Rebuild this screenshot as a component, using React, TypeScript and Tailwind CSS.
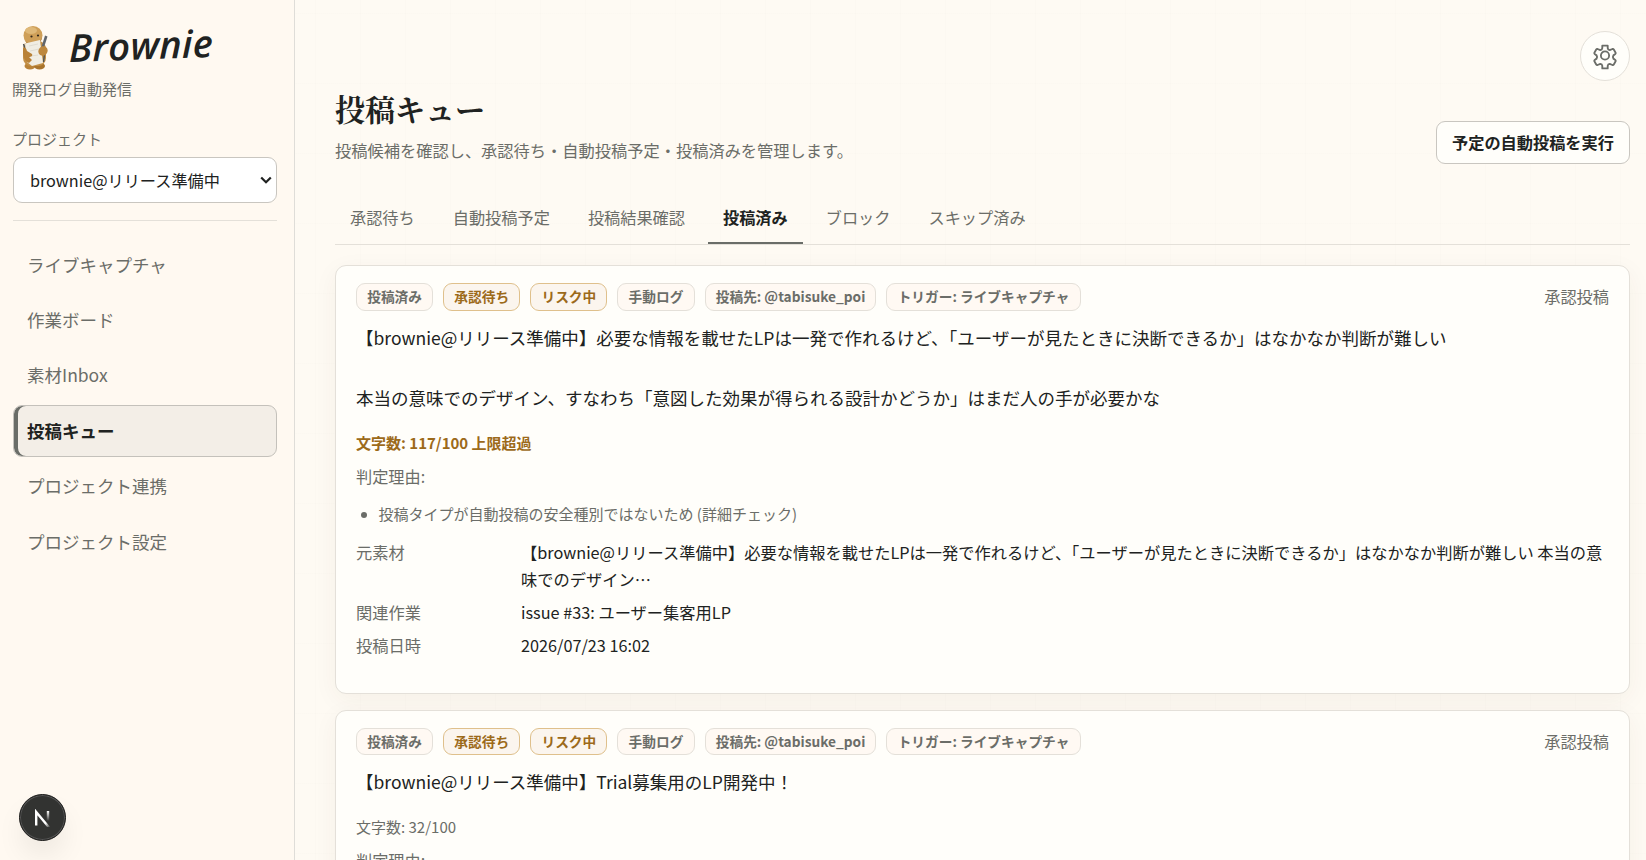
import { FC, ReactNode } from "react";

interface IPost {
  id: number;
  text: string;
  count: number;
  reasons: string[];
  source?: string;
  issue?: string;
  date?: string;
}

const navItems = [
  "ライブキャプチャ",
  "作業ボード",
  "素材Inbox",
  "投稿キュー",
  "プロジェクト連携",
  "プロジェクト設定",
];

const tabs = ["承認待ち", "自動投稿予定", "投稿結果確認", "投稿済み", "ブロック", "スキップ済み"];

const posts: IPost[] = [
  {
    id: 1,
    text: "【brownie@リリース準備中】必要な情報を載せたLPは一発で作れるけど、「ユーザーが見たときに決断できるか」はなかなか判断が難しい\n\n本当の意味でのデザイン、すなわち「意図した効果が得られる設計かどうか」はまだ人の手が必要かな",
    count: 117,
    reasons: ["投稿タイプが自動投稿の安全種別ではないため (詳細チェック)"],
    source:
      "【brownie@リリース準備中】必要な情報を載せたLPは一発で作れるけど、「ユーザーが見たときに決断できるか」はなかなか判断が難しい 本当の意味でのデザイン…",
    issue: "issue #33: ユーザー集客用LP",
    date: "2026/07/23 16:02",
  },
  {
    id: 2,
    text: "【brownie@リリース準備中】Trial募集用のLP開発中！",
    count: 32,
    reasons: [],
  },
];

const Mascot: FC = () => (
  <svg width="28" height="44" viewBox="0 0 28 44">
    <ellipse cx="9" cy="40" rx="5.500" ry="3.500" fill="#b98237" />
    <ellipse cx="18.500" cy="40" rx="5.500" ry="3.500" fill="#a9742c" />
    <rect x="2" y="15" width="23" height="25" rx="8" fill="#c38f45" />
    <path d="M2.500 18l3 9M23.500 28l-1 8" stroke="#4d5257" strokeWidth="1.400" />
    <circle cx="12" cy="9.500" r="9.500" fill="#cf9f58" />
    <path d="M3 12c2 8 16 8 18-1 0 9-16 11-18 1z" fill="#b07a33" />
    <ellipse cx="10" cy="4.500" rx="6" ry="3.500" fill="#dfb878" />
    <circle cx="10.500" cy="10.500" r="1.100" fill="#33271b" />
    <circle cx="17" cy="9.500" r="1.100" fill="#33271b" />
    <path d="M4 17.500l15-3.500 3 23-11 3-5-4z" fill="#f0ede3" />
    <path d="M8 20l9-2M9 25l9-2M10 30l7-1" stroke="#dcd8cd" strokeWidth=".8" />
    <path d="M24 9.500l2.500 1-4.500 14-2.500 2 .5-4z" fill="#60656c" />
    <path d="M2 25c0-5 3-4 4 0l5 3c1 2-1 3-3 3l3 3-3 3c-4-2-6-6-6-12z" fill="#b98136" />
    <ellipse cx="22" cy="25" rx="4.500" ry="5" transform="rotate(35 22 25)" fill="#be883e" />
  </svg>
);

const Sidebar: FC = () => (
  <aside className="w-[295px] h-full shrink-0 border-r border-[#dfddd8] bg-[#fff9f1] pl-[13px] pr-[17px] pt-[25px] text-[#6b6d68]">
    <div className="flex h-[45px] items-center">
      <div className="ml-2 w-[28px]">
        <Mascot />
      </div>
      <span className="mb-[2px] ml-[20px] origin-left -rotate-2 -skew-x-2 font-['Open_Sans'] text-[38px] leading-none font-semibold italic tracking-[0.3px] text-[#202221]">
        Brownie
      </span>
    </div>
    <p className="-ml-px mt-1.5 text-[15px] leading-[25px]">開発ログ自動発信</p>
    <p className="-ml-px mt-[25px] text-[15px] leading-[25px]">プロジェクト</p>
    <div className="relative mt-[6px]">
      <select className="block h-[46px] w-full appearance-none rounded-[9px] border border-[#c9c6c0] bg-white px-4 text-[16.200px] text-[#202221]">
        <option>brownie@リリース準備中</option>
      </select>
      <svg
        className="pointer-events-none absolute top-[19px] right-[5px]"
        width="12"
        height="9"
        viewBox="0 0 12 9"
        fill="none"
        stroke="#202221"
        strokeWidth="2.200"
      >
        <path d="M1.200 1.500L6 6.300l4.800-4.800" />
      </svg>
    </div>
    <nav className="mt-[17px] flex flex-col gap-1 border-t border-[#e4e0d9] pt-[18px]">
      {navItems.map((item) => (
        <a
          key={item}
          className={
            item === "投稿キュー"
              ? "flex h-[51.400px] items-center rounded-[9px] border border-[#c4c1bb] bg-[#f3eee7] pl-[13px] text-[17.500px] font-bold text-[#202221] shadow-[inset_4px_0_0_#6a6d68]"
              : "flex h-[51.400px] items-center pl-[14px] text-[17.500px]"
          }
        >
          {item}
        </a>
      ))}
    </nav>
  </aside>
);

const Pill: FC<{ children: ReactNode; warn?: boolean }> = ({ children, warn }) => (
  <span
    className={
      warn
        ? "rounded-[9px] border border-[#dfc08c] bg-[#fbf5ee] px-[10.200px] text-[13.700px] leading-[25.500px] font-bold text-[#9c6a1a]"
        : "rounded-[9px] border border-[#e4e0d9] bg-[#fff9f3] px-[10.200px] text-[13.700px] leading-[25.500px] font-bold text-[#6b6d68]"
    }
  >
    {children}
  </span>
);

const PostCard: FC<{ post: IPost }> = ({ post }) => (
  <article className="min-h-[428.500px] shrink-0 rounded-[11px] border border-[#e4e0d9] bg-[#fffefa] px-5 pt-[17px] shadow-[0_6px_24px_rgba(80,50,20,0.05)]">
    <div className="flex items-center gap-[10px]">
      <Pill>投稿済み</Pill>
      <Pill warn>承認待ち</Pill>
      <Pill warn>リスク中</Pill>
      <Pill>手動ログ</Pill>
      <Pill>投稿先: @tabisuke_poi</Pill>
      <Pill>トリガー: ライブキャプチャ</Pill>
      <span className="-mt-px ml-auto text-[16.200px] text-[#6b6d68]">承認投稿</span>
    </div>
    <p className="mt-[12px] text-[17.500px] leading-[30px] whitespace-pre-wrap">{post.text}</p>
    <p
      className={
        post.count > 100
          ? "mt-[17px] text-[15px] leading-[26px] font-bold text-[#9c6a1a]"
          : "mt-[17px] text-[15px] leading-[26px] text-[#6b6d68]"
      }
    >
      文字数: {post.count}/100{post.count > 100 && " 上限超過"}
    </p>
    <p className="mt-[7px] text-[16.200px] leading-[27px] text-[#6b6d68]">判定理由:</p>
    {post.reasons.length > 0 && (
      <ul className="mt-[11px] list-disc pl-[22.500px] text-[15px] leading-[26px] text-[#6b6d68]">
        {post.reasons.map((reason) => (
          <li key={reason}>{reason}</li>
        ))}
      </ul>
    )}
    {post.source && (
      <dl className="mt-[12px] grid grid-cols-[150px_1fr] gap-x-[15px] gap-y-[6px] text-[16.260px] leading-[27.200px]">
        <dt className="text-[#6b6d68]">元素材</dt>
        <dd>{post.source}</dd>
        <dt className="text-[#6b6d68]">関連作業</dt>
        <dd>{post.issue}</dd>
        <dt className="text-[#6b6d68]">投稿日時</dt>
        <dd>{post.date}</dd>
      </dl>
    )}
  </article>
);

const App: FC = () => {
  return (
    <div className="relative flex h-[860px] w-full overflow-hidden bg-[#fffbf5] font-['Noto_Sans_CJK_JP',sans-serif] text-[#202221]">
      <Sidebar />
      <main className="flex min-w-0 flex-1 flex-col bg-[#fefaf3] bg-[linear-gradient(#6b6d6803_1px,transparent_1px),linear-gradient(90deg,#6b6d6803_1px,transparent_1px)] bg-[size:45px_70px] bg-[position:20px_13px] pt-[31px] pr-4 pl-10">
        <button className="flex size-[50px] shrink-0 items-center justify-center self-end rounded-full border border-[#e4e0d9] bg-[#fffefa] pt-[2px] text-[#6b6d68]">
          <svg
            width="26"
            height="26"
            viewBox="0 0 24 24"
            fill="none"
            stroke="currentColor"
            strokeWidth="1.700"
            strokeLinejoin="round"
          >
            <circle cx="12" cy="10.600" r="3.800" />
            <path d="M9.500 1.500h5v2.400q.2 1.600 1.800 1.800l2.600-1.100q.8-.2 1.200.5l1.700 2.900q.3.800-.3 1.300l-1.700 1.200q-1 1.500 0 3l1.700 1.200q.6.500.3 1.300l-1.700 2.900q-.4.700-1.200.5l-2.600-1.100q-1.600.2-1.800 1.800v2.400h-5v-2.400q-.2-1.600-1.800-1.800l-2.600 1.100q-.8.200-1.200-.5L2.200 16q-.3-.8.300-1.300l1.700-1.200q1-1.500 0-3L2.500 9.300q-.6-.5-.3-1.300l1.700-2.900q.4-.7 1.200-.5l2.600 1.100q1.600-.2 1.800-1.800z" />
          </svg>
        </button>
        <header className="flex items-end justify-between">
          <div className="mt-[3px]">
            <h1 className="font-['Noto_Serif_CJK_JP','Noto_Serif_JP','Liberation_Serif','Noto_Sans_CJK_JP',serif] text-[30px] leading-[48px] font-bold">
              投稿キュー
            </h1>
            <p className="mt-[4px] text-[16.240px] leading-[28px] text-[#6b6d68]">
              投稿候補を確認し、承認待ち・自動投稿予定・投稿済みを管理します。
            </p>
          </div>
          <button className="h-[43px] w-[194px] rounded-[9px] border border-[#c9c6c0] bg-[#fffefa] text-[16.200px] font-bold">
            予定の自動投稿を実行
          </button>
        </header>
        <nav className="mt-[29px] flex gap-2 border-b border-[#e4e0d9]">
          {tabs.map((tab) => (
            <a
              key={tab}
              className={
                tab === "投稿済み"
                  ? "h-[51px] border-b-2 border-[#6a6d68] px-[15px] text-[16.190px] leading-[49px] font-bold"
                  : "h-[51px] px-[15px] text-[16.190px] leading-[49px] text-[#6b6d68]"
              }
            >
              {tab}
            </a>
          ))}
        </nav>
        <section className="mt-5 flex flex-col gap-4">
          {posts.map((post) => (
            <PostCard key={post.id} post={post} />
          ))}
        </section>
      </main>
      <div className="absolute bottom-[19px] left-[19px] flex size-[47px] items-center justify-center rounded-full border border-[#1c1c1b] bg-[#323331] shadow-[inset_0_0_0_1px_#555,0_16px_32px_-8px_rgba(0,0,0,0.14)]">
        <svg width="17" height="18" viewBox="0 0 17 18" fill="none">
          <defs>
            <linearGradient id="leg" x1="0" y1="0" x2="0" y2="1">
              <stop offset="0" stopColor="#fff" />
              <stop offset="1" stopColor="#fff" stopOpacity="0" />
            </linearGradient>
            <linearGradient id="diag" x1="0" y1="0" x2="1" y2="1">
              <stop offset=".7" stopColor="#fff" />
              <stop offset="1" stopColor="#fff" stopOpacity="0" />
            </linearGradient>
          </defs>
          <path d="M2.200 16.500V3L15.500 19" stroke="url(#diag)" strokeWidth="2.400" />
          <rect x="12.800" y="2" width="2.400" height="10" fill="url(#leg)" />
        </svg>
      </div>
    </div>
  );
};

export default App;
